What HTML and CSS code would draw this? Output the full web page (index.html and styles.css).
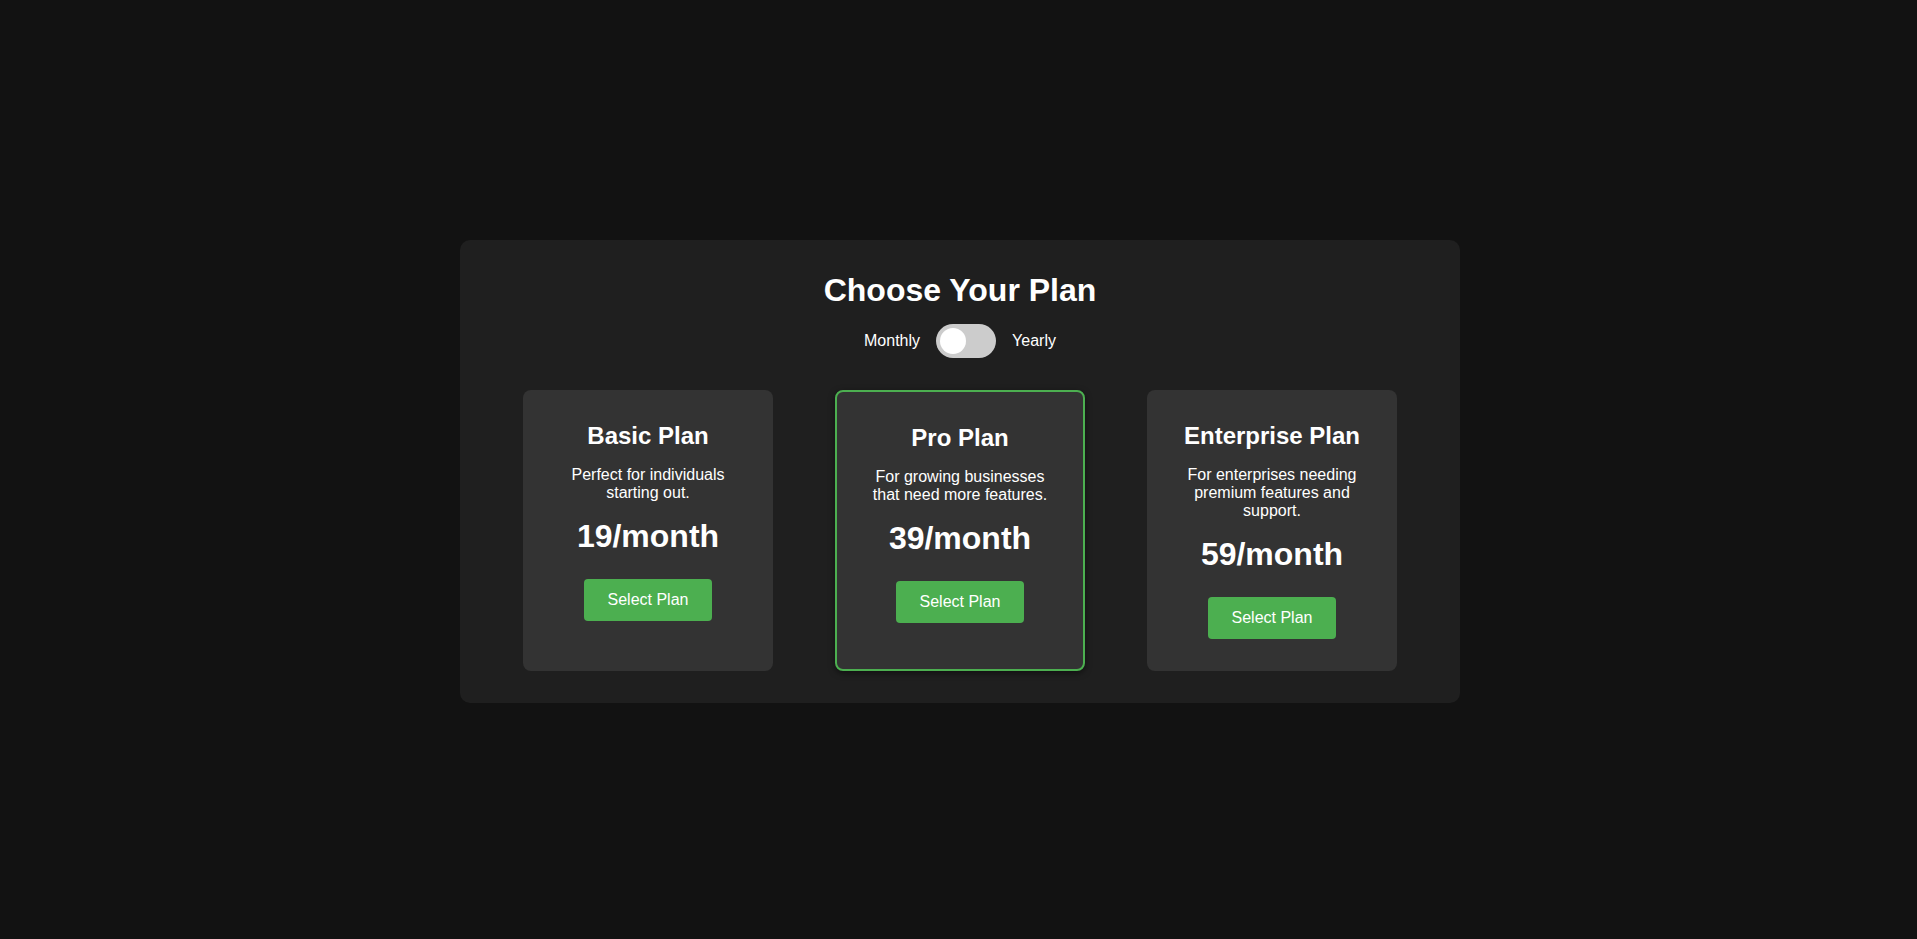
FILE: index.html
```html
<!DOCTYPE html>
<html lang="en">
<head>
<meta charset="UTF-8">
<title>Choose Your Plan</title>
<link rel="stylesheet" href="styles.css">
</head>
<body>
  <div class="pricing">
    <h1 class="pricing-title">Choose Your Plan</h1>
    <div class="billing-toggle">
      <span class="billing-label">Monthly</span>
      <label class="switch">
        <input type="checkbox" class="switch-input">
        <span class="switch-slider"></span>
      </label>
      <span class="billing-label">Yearly</span>
    </div>
    <div class="plans">
      <div class="plan">
        <h2 class="plan-name">Basic Plan</h2>
        <p class="plan-desc">Perfect for individuals starting out.</p>
        <p class="plan-price">19/month</p>
        <button class="plan-btn">Select Plan</button>
      </div>
      <div class="plan plan-featured">
        <h2 class="plan-name">Pro Plan</h2>
        <p class="plan-desc">For growing businesses that need more features.</p>
        <p class="plan-price">39/month</p>
        <button class="plan-btn">Select Plan</button>
      </div>
      <div class="plan">
        <h2 class="plan-name">Enterprise Plan</h2>
        <p class="plan-desc">For enterprises needing premium features and support.</p>
        <p class="plan-price">59/month</p>
        <button class="plan-btn">Select Plan</button>
      </div>
    </div>
  </div>
</body>
</html>
```
FILE: styles.css
```css
* {
  box-sizing: border-box;
}

html, body {
  margin: 0;
  padding: 0;
}

body {
  background: #121212;
  color: #ffffff;
  font-family: "Liberation Sans", Arial, sans-serif;
  font-size: 16px;
  min-height: 100vh;
  padding: 4px 0 0 3px;
  display: flex;
  align-items: center;
  justify-content: center;
}

.pricing {
  width: 1000px;
  background: #1f1f1f;
  border-radius: 10px;
  padding: 32px;
  text-align: center;
}

.pricing-title {
  margin: 0 0 15px;
  font-size: 32px;
  font-weight: bold;
}

.billing-toggle {
  display: flex;
  align-items: center;
  justify-content: center;
  gap: 16px;
  margin-bottom: 32px;
}

.billing-label {
  font-size: 16px;
}

.switch {
  position: relative;
  display: inline-block;
  width: 60px;
  height: 34px;
}

.switch-input {
  opacity: 0;
  width: 0;
  height: 0;
  margin: 0;
}

.switch-slider {
  position: absolute;
  inset: 0;
  background: #cccccc;
  border-radius: 34px;
  cursor: pointer;
}

.switch-slider::before {
  content: "";
  position: absolute;
  left: 4px;
  top: 4px;
  width: 26px;
  height: 26px;
  border-radius: 50%;
  background: #ffffff;
}

.plans {
  display: flex;
  justify-content: space-around;
}

.plan {
  width: 250px;
  background: #333333;
  border-radius: 8px;
  padding: 32px;
  display: flex;
  flex-direction: column;
  align-items: center;
}

.plan-featured {
  border: 2px solid #4caf50;
  box-shadow: 0 2px 6px rgba(0, 0, 0, 0.5);
}

.plan-name {
  margin: 0 0 16px;
  font-size: 24px;
  font-weight: bold;
}

.plan-desc {
  margin: 0 0 16px;
  font-size: 16px;
}

.plan-price {
  margin: 0 0 24px;
  font-size: 32px;
  font-weight: bold;
}

.plan-btn {
  background: #4caf50;
  color: #ffffff;
  border: none;
  border-radius: 4px;
  padding: 12px 24px;
  font-family: "Liberation Sans", Arial, sans-serif;
  font-size: 16px;
  cursor: pointer;
}
```
